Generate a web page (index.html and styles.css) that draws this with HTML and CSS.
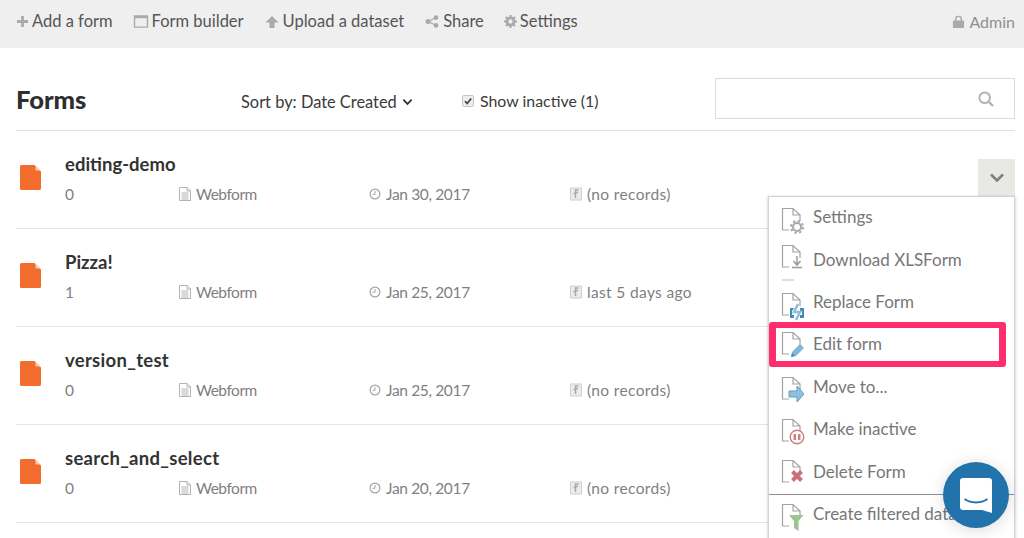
FILE: index.html
```html
<!DOCTYPE html>
<html lang="en">
<head>
<meta charset="utf-8">
<title>Forms</title>
<link rel="stylesheet" href="styles.css">
</head>
<body>
<svg class="defs" width="0" height="0" aria-hidden="true">
  <defs>
    <path id="doc" d="M9 22H2.500V.5H13L20 7V13M13 .5V7H20" fill="none" stroke="#a3a3a3" stroke-width="1.200"/>
    <symbol id="orange" viewBox="0 0 22 25"><path d="M1.500 0H14.500L21 6.500V23.500a1.500 1.500 0 0 1-1.500 1.500H1.500A1.500 1.500 0 0 1 0 23.500V1.500A1.500 1.500 0 0 1 1.500 0Z" fill="#f26c2e"/><path d="M15.500 .5V5.500H20.500Z" fill="#fbc9a8"/></symbol>
    <symbol id="webform" viewBox="0 0 12 14"><path d="M.5.500H8L11.500 4V13.500H.5ZM8 .5V4H11.500M2.500 6H9.500M2.500 8H9.500M2.500 10H9.500M2.500 12H9.500" fill="none" stroke="#aaa" stroke-width=".9"/></symbol>
    <symbol id="clock" viewBox="0 0 12 12"><circle cx="6" cy="6" r="4.900" fill="none" stroke="#a5a5a5" stroke-width="1.200"/><path d="M6 3V6.300H3.500" fill="none" stroke="#a5a5a5"/></symbol>
    <symbol id="rec" viewBox="0 0 12 13"><path d="M.5.500H11.500V12.500H.5Z" fill="#ececec" stroke="#cfcfcf"/><path d="M8.500 2.500H5.500V6H3.500M8 5H5.500V10.500" fill="none" stroke="#a8a8a8" stroke-width="1.500"/></symbol>
  </defs>
</svg>

<header class="topbar">
  <nav class="topnav">
    <a class="navlink"><svg class="ni" viewBox="0 0 14 14"><path d="M5.500 1H8.500V5.500H13V8.500H8.500V13H5.500V8.500H1V5.500H5.500Z" fill="#aaa"/></svg>Add a form</a>
    <a class="navlink"><svg class="ni ni-w" viewBox="0 0 16 14"><path d="M1 1H15V13H1Z" fill="none" stroke="#aaa" stroke-width="1.500"/><path d="M1 1H15V3.500H1Z" fill="#aaa"/></svg>Form builder</a>
    <a class="navlink"><svg class="ni ni-w" viewBox="0 0 15 14"><path d="M7.500 1L14.500 8H10.200V14H4.800V8H.5Z" fill="#aaa"/></svg>Upload a dataset</a>
    <a class="navlink"><svg class="ni ni-w" viewBox="0 0 15 14"><path d="M11.500 3L3.500 7L11.500 11" fill="none" stroke="#aaa" stroke-width="1.300"/><circle cx="11.800" cy="2.800" r="2.500" fill="#aaa"/><circle cx="3.200" cy="7" r="2.700" fill="#aaa"/><circle cx="11.800" cy="11.200" r="2.500" fill="#aaa"/></svg>Share</a>
    <a class="navlink"><svg class="ni" viewBox="0 0 14 14"><circle cx="7" cy="7" r="3.800" fill="none" stroke="#aaa" stroke-width="3"/><path d="M7 0V14M0 7H14M2 2L12 12M12 2L2 12" stroke="#aaa" stroke-width="2.200" stroke-dasharray="2.400 9.200 2.400"/></svg>Settings</a>
  </nav>
  <a class="navlink admin"><svg class="ni" viewBox="0 0 12 14"><path d="M3 6.500V4.500a3 3 0 0 1 6 0V6.500" fill="none" stroke="#aaa" stroke-width="1.500"/><path d="M1 6H11a1 1 0 0 1 1 1V13a1 1 0 0 1-1 1H1a1 1 0 0 1-1-1V7a1 1 0 0 1 1-1Z" fill="#aaa"/></svg>Admin</a>
</header>

<main class="content">
  <section class="toolbar">
    <h1 class="title">Forms</h1>
    <div class="sort">Sort by: Date Created<svg class="caret" viewBox="0 0 12 8"><path d="M1.500 1.500L6 6L10.500 1.500" fill="none" stroke="#333" stroke-width="2"/></svg></div>
    <label class="inactive"><span class="check"><svg viewBox="0 0 10 10"><path d="M2 5.200L4.200 7.500L8.200 2.500" fill="none" stroke="#444" stroke-width="1.800"/></svg></span>Show inactive (1)</label>
    <div class="search"><svg class="search-i" viewBox="0 0 16 16"><circle cx="6.700" cy="6.700" r="5.300" fill="none" stroke="#b3b3b3" stroke-width="2"/><path d="M10.500 10.500L15 15" stroke="#b3b3b3" stroke-width="2.400"/></svg></div>
  </section>

  <ul class="forms">
    <li class="row">
      <svg class="file"><use href="#orange"/></svg>
      <div class="info">
        <div class="name">editing-demo</div>
        <div class="meta"><span class="m-count">0</span><span class="m-type"><svg class="mi"><use href="#webform"/></svg>Webform</span><span class="m-date"><svg class="mi mi-c"><use href="#clock"/></svg>Jan 30, 2017</span><span class="m-rec"><svg class="mi"><use href="#rec"/></svg>(no records)</span></div>
      </div>
    </li>
    <li class="row">
      <svg class="file"><use href="#orange"/></svg>
      <div class="info">
        <div class="name">Pizza!</div>
        <div class="meta"><span class="m-count">1</span><span class="m-type"><svg class="mi"><use href="#webform"/></svg>Webform</span><span class="m-date"><svg class="mi mi-c"><use href="#clock"/></svg>Jan 25, 2017</span><span class="m-rec"><svg class="mi"><use href="#rec"/></svg>last 5 days ago</span></div>
      </div>
    </li>
    <li class="row">
      <svg class="file"><use href="#orange"/></svg>
      <div class="info">
        <div class="name name-u">version_test</div>
        <div class="meta"><span class="m-count">0</span><span class="m-type"><svg class="mi"><use href="#webform"/></svg>Webform</span><span class="m-date"><svg class="mi mi-c"><use href="#clock"/></svg>Jan 25, 2017</span><span class="m-rec"><svg class="mi"><use href="#rec"/></svg>(no records)</span></div>
      </div>
    </li>
    <li class="row">
      <svg class="file"><use href="#orange"/></svg>
      <div class="info">
        <div class="name name-u">search_and_select</div>
        <div class="meta"><span class="m-count">0</span><span class="m-type"><svg class="mi"><use href="#webform"/></svg>Webform</span><span class="m-date"><svg class="mi mi-c"><use href="#clock"/></svg>Jan 20, 2017</span><span class="m-rec"><svg class="mi"><use href="#rec"/></svg>(no records)</span></div>
      </div>
    </li>
  </ul>
</main>

<button class="toggle" aria-label="Open menu"><svg viewBox="0 0 16 10"><path d="M2 1.500L8 7.500L14 1.500" fill="none" stroke="#808080" stroke-width="2.600"/></svg></button>

<div class="menu">
  <a class="item"><svg class="mic" viewBox="0 0 28 36"><use href="#doc" y="9"/><circle cx="17" cy="28" r="4" fill="#fff" stroke="#a9a9a9" stroke-width="2"/><circle cx="17" cy="28" r="6" fill="none" stroke="#a9a9a9" stroke-width="2" stroke-dasharray="2.400 2.300"/></svg>Settings</a>
  <a class="item"><svg class="mic" viewBox="0 0 28 36"><use href="#doc" y="4"/><path d="M17 15V23M13.500 20L17 24L20.500 20M12 26.500H22" fill="none" stroke="#9a9a9a" stroke-width="1.500"/><path d="M2 39H14" stroke="#bdbdbd"/></svg>Download XLSForm</a>
  <a class="item"><svg class="mic" viewBox="0 0 28 36"><use href="#doc" y="10"/><path d="M10 25H14L12 28V32H14V35H10ZM24 25H20V28L22 28V32H20V35H24Z" fill="#3f8db8"/><path d="M18 21L14 29H20L16 37" fill="none" stroke="#8fbfdc" stroke-width="2.500"/></svg>Replace Form</a>
  <a class="item"><svg class="mic" viewBox="0 0 28 36"><use href="#doc" y="6"/><path d="M11 31L12 26L20 18L24 22L16 30Z" fill="#7db6d8"/><path d="M11 31L12 27L15 30Z" fill="#3f8db8"/></svg>Edit form</a>
  <a class="item"><svg class="mic" viewBox="0 0 28 36"><use href="#doc" y="9"/><path d="M9 23H17V18L24 26L17 34V29H9Z" fill="#8fbfdc" stroke="#5d9fc7"/></svg>Move to...</a>
  <a class="item"><svg class="mic" viewBox="0 0 28 36"><use href="#doc" y="8"/><circle cx="17" cy="26" r="6.800" fill="#fff" stroke="#c98080" stroke-width="1.400"/><path d="M13.500 23H16V29H13.500ZM18 23H20.500V29H18Z" fill="#d28080"/></svg>Make inactive</a>
  <a class="item"><svg class="mic" viewBox="0 0 28 36"><use href="#doc" y="7"/><path d="M12.500 18.500L21.500 27.500M21.500 18.500L12.500 27.500" stroke="#c9707a" stroke-width="4"/></svg>Delete Form</a>
  <a class="item item-sep"><svg class="mic" viewBox="0 0 28 36"><use href="#doc" y="8"/><path d="M9 19H23.500L18.500 25V35L14 32V25Z" fill="#9cc48e"/></svg>Create filtered data</a>
</div>

<div class="highlight"></div>

<div class="chat"><svg viewBox="0 0 32 36"><path d="M3 0H29a3 3 0 0 1 3 3V35L22 32H3a3 3 0 0 1-3-3V3a3 3 0 0 1 3-3Z" fill="#fff"/><path d="M4.500 21C11 25.500 21 25.500 27.500 21" fill="none" stroke="#2272ac" stroke-width="2"/></svg></div>
</body>
</html>
```
FILE: styles.css
```css
* { box-sizing: border-box; }
html, body { margin: 0; height: 538px; overflow: hidden; background: #fff; }
body { font-family: "Lato", "Open Sans", sans-serif; font-size: 16px; color: #333; position: relative; }
.defs { position: absolute; }
ul { list-style: none; margin: 0; padding: 0; }

.topbar { height: 48px; background: #efefef; display: flex; align-items: center; justify-content: space-between; padding: 0 9px 6px 16px; }
.topnav { display: flex; gap: 20px; }
.navlink { display: flex; align-items: center; gap: 3px; color: #555; font-size: 16.500px; }
.ni { width: 13px; height: 13px; }
.ni-w { width: 16px; height: 13px; }
.admin { color: #8f8f8f; font-size: 16px; gap: 4px; }

.content { padding: 0 9px 0 16px; }
.toolbar { height: 83px; padding-top: 23px; border-bottom: 1px solid #e2e2e2; display: flex; align-items: flex-start; position: relative; }
.title { margin: 0; width: 225px; font-size: 25.500px; font-weight: 900; line-height: 56px; color: #2e2e2e; height: 56px; }
.sort { width: 221px; line-height: 61px; display: flex; align-items: center; height: 61px; gap: 5px; color: #3a3a3a; font-size: 16.400px; }
.caret { width: 11px; height: 8px; }
.inactive { display: flex; align-items: center; height: 59px; gap: 6px; color: #3a3a3a; font-size: 15.900px; }
.check { width: 12px; height: 12px; border: 1px solid #c4c4c4; border-radius: 2px; background: #eee; display: flex; }
.search { margin-left: auto; width: 300px; height: 41px; margin-top: 7px; border: 1px solid #dcdcdc; display: flex; align-items: center; justify-content: flex-end; padding-right: 20px; }
.search-i { width: 16px; height: 16px; }

.row { height: 98px; border-bottom: 1px solid #e6e6e6; display: flex; align-items: flex-start; padding-top: 20px; }
.file { width: 22px; height: 25px; margin: 14px 23px 0 4px; }
.info { flex: 1; }
.name { font-size: 18.500px; font-weight: 700; line-height: 27px; height: 28px; color: #333; }
.name-u { letter-spacing: .3px; }
.meta { display: flex; align-items: center; color: #7f7f7f; font-size: 15.500px; margin-top: 3px; line-height: 24px; }
.meta span { display: flex; align-items: center; }
.m-count { width: 114px; }
.m-type { width: 190px; letter-spacing: -.5px; }
.m-date { width: 201px; letter-spacing: -.35px; }
.m-rec { letter-spacing: .35px; }
.mi { width: 12px; height: 14px; margin-right: 5px; }
.mi-c { height: 12px; }

.toggle { position: absolute; left: 978px; top: 159px; width: 37px; height: 37px; border: 0; padding: 0; background: #e8e8e4; display: flex; align-items: center; justify-content: center; }
.toggle svg { width: 16px; height: 10px; }

.menu { position: absolute; left: 768px; top: 196px; width: 247px; height: 360px; background: #fff; border: 1px solid #d2d2d2; box-shadow: 0 1px 3px rgba(0,0,0,.25); }
.item { height: 42.400px; display: flex; align-items: center; padding: 0 0 3px 11px; color: #777; font-size: 17px; gap: 5px; }
.item-sep { border-top: 1px solid #8f8f8f; }
.mic { width: 28px; height: 36px; flex: none; overflow: visible; }

.highlight { position: absolute; left: 769px; top: 322px; width: 237px; height: 45px; border-style: solid; border-color: #ff2d6b; border-width: 6px 7px; border-radius: 3px; }

.chat { position: absolute; left: 943px; top: 462px; width: 66px; height: 66px; border-radius: 50%; background: #2272ac; box-shadow: 0 2px 16px rgba(0,0,0,.15); display: flex; align-items: center; justify-content: center; }
.chat svg { width: 32px; height: 36px; margin-top: 2px; }
```
